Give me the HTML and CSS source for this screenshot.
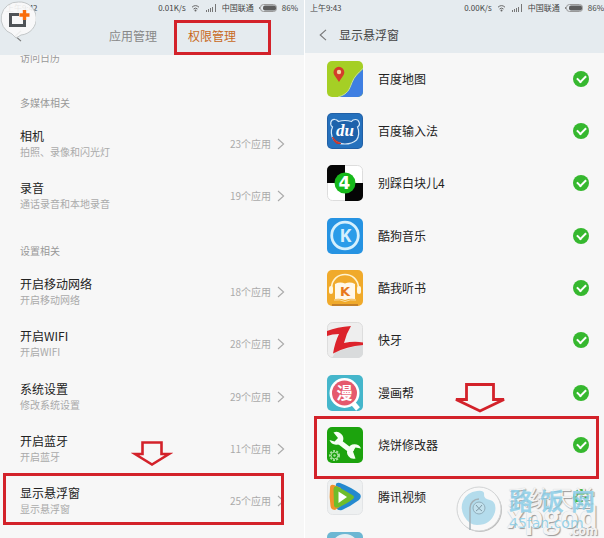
FILE: index.html
```html
<!DOCTYPE html>
<html lang="zh-CN">
<head>
    <meta charset="UTF-8">
    <meta name="viewport" content="width=device-width, initial-scale=1.0">
    <title>权限管理</title>
    <link rel="stylesheet" href="styles.css">
</head>
<body>

    <!-- iconos compartidos -->
    <svg class="defs" width="0" height="0" aria-hidden="true">
        <symbol id="wifi" viewBox="0 0 9 8">
            <path d="M1 3.2Q4.5 0 8 3.2M2.5 5Q4.5 3.2 6.5 5" fill="none" stroke="#666" stroke-width="1"/>
            <circle cx="4.5" cy="6.4" r="1" fill="#666"/>
        </symbol>
        <symbol id="signal" viewBox="0 0 12 8">
            <path d="M1.5 8V6M3.5 8V5M5.5 8V4M7.5 8V3M10.5 8V0" stroke="#777" stroke-width="1"/>
        </symbol>
        <symbol id="battery" viewBox="0 0 18 8">
            <rect x="1.5" y=".5" width="16" height="7" rx="3" fill="none" stroke="#999"/>
            <rect x="4" y="1.5" width="13" height="5" rx="2" fill="#5d5d5d"/>
            <path d="M.5 3v2" stroke="#888"/>
        </symbol>
        <symbol id="back" viewBox="0 0 8 12">
            <path d="M7 .8L1.2 6L7 11.2" fill="none" stroke="#777" stroke-width="1.1"/>
        </symbol>
        <symbol id="next" viewBox="0 0 8 12">
            <path d="M1 1L6.6 6L1 11" fill="none" stroke="#aaa" stroke-width="1.1"/>
        </symbol>
    </svg>

    <main class="screens">
        <section class="phone">
            <header class="top">
                <div class="status">
                    <span class="time">上午9:42</span>
                    <span>0.01K/s</span>
                    <svg class="wifi"><use href="#wifi"/></svg>
                    <svg class="signal"><use href="#signal"/></svg>
                    <span>中国联通</span>
                    <svg class="battery"><use href="#battery"/></svg>
                    <span>86%</span>
                </div>
                <nav class="bar tabs">
                    <button class="back" aria-label="返回"><svg><use href="#back"/></svg></button>
                    <button class="tab">应用管理</button>
                    <button class="tab active">权限管理<span class="mark"></span></button>
                </nav>
                <svg class="bubble" viewBox="0 0 36 42" aria-hidden="true">
                    <path d="M18.5 2A16.5 16.5 0 0 1 21 35L16 38L12 34A16.5 16.5 0 0 1 18.5 2Z" fill="#fafafa" fill-opacity=".9" stroke="#c3c7c9"/>
                    <path d="M19 14.5H10.5V25.5H24.5V20" fill="none" stroke="#4f5357" stroke-width="3"/>
                    <path d="M24.5 10v10M19.5 15h10" stroke="#f96d0b" stroke-width="3.4"/>
                </svg>
            </header>

            <div class="list">
                <p class="cut">访问日历</p>

                <h2>多媒体相关</h2>
                <a class="row" href="#">
                    <span class="name">相机<small>拍照、录像和闪光灯</small></span>
                    <span class="count">23个应用</span>
                    <svg class="next"><use href="#next"/></svg>
                </a>
                <a class="row" href="#">
                    <span class="name">录音<small>通话录音和本地录音</small></span>
                    <span class="count">19个应用</span>
                    <svg class="next"><use href="#next"/></svg>
                </a>

                <h2>设置相关</h2>
                <a class="row" href="#">
                    <span class="name">开启移动网络<small>开启移动网络</small></span>
                    <span class="count">18个应用</span>
                    <svg class="next"><use href="#next"/></svg>
                </a>
                <a class="row" href="#">
                    <span class="name">开启WIFI<small>开启WIFI</small></span>
                    <span class="count">28个应用</span>
                    <svg class="next"><use href="#next"/></svg>
                </a>
                <a class="row" href="#">
                    <span class="name">系统设置<small>修改系统设置</small></span>
                    <span class="count">29个应用</span>
                    <svg class="next"><use href="#next"/></svg>
                </a>
                <a class="row" href="#">
                    <span class="name">开启蓝牙<small>开启蓝牙</small></span>
                    <span class="count">11个应用</span>
                    <svg class="next"><use href="#next"/></svg>
                </a>
                <a class="row" href="#">
                    <span class="name">显示悬浮窗<small>显示悬浮窗</small></span>
                    <span class="count">25个应用</span>
                    <svg class="next"><use href="#next"/></svg>
                    <span class="mark"></span>
                    <svg class="arrow" viewBox="0 0 42 26">
                        <path d="M11.5 1.5H30.500V13H38L21 23.500L4 13H11.500Z" fill="#f7f7f7" stroke="#d3222a" stroke-width="2.6"/>
                    </svg>
                </a>
            </div>
        </section>

        <section class="phone second">
            <header class="top">
                <div class="status">
                    <span class="time">上午9:43</span>
                    <span>0.00K/s</span>
                    <svg class="wifi"><use href="#wifi"/></svg>
                    <svg class="signal"><use href="#signal"/></svg>
                    <span>中国联通</span>
                    <svg class="battery"><use href="#battery"/></svg>
                    <span>86%</span>
                </div>
                <div class="bar">
                    <button class="back" aria-label="返回"><svg><use href="#back"/></svg></button>
                    <h1>显示悬浮窗</h1>
                </div>
            </header>

            <div class="apps">
                <label class="app">
                    <svg class="icon" viewBox="0 0 36 36">
                        <rect width="36" height="36" rx="5" fill="#a5cf25"/>
                        <path d="M36 8V31a5 5 0 0 1-5 5H12C21 33 22 29 25 22C27 16 31 13 36 8Z" fill="#3f7fe2"/>
                        <path d="M36 7.5C31 12 27 16 25 21.5C22 29 21 33 11 36" fill="none" stroke="#c4dfa0"/>
                        <path d="M12 21C9 16 6.5 14 6.5 11.2a5.4 5.4 0 0 1 10.8 0C17.3 14 15 16 12 21Z" fill="#d33d2b"/>
                        <circle cx="12" cy="11" r="2.2" fill="#f2d6a0"/>
                    </svg>
                    <span>百度地图</span>
                    <input type="checkbox" checked>
                </label>
                <label class="app">
                    <svg class="icon" viewBox="0 0 36 36">
                        <rect width="36" height="36" rx="5" fill="#2160a6"/>
                        <rect x="1" y="1" width="34" height="34" rx="4" fill="#2571bd"/>
                        <path d="M7 27C3.5 23 4 17 5.5 14C2 11 4 6 8 6.5C10 6.5 11 8 11.5 8.5Q18 6.5 24.5 8.5C26 6 31 5.5 32 9C33 11 32 13 30.5 14C32.5 18 32 24 29.5 27Q25 31 18 31Q11 31 7 27Z" fill="#1d62ab" stroke="#d5e8f8" stroke-width="1.2"/>
                        <path d="M5.5 24Q9 29 14 30.5L10 30.5Q6 28 5.5 24Z" fill="#c5372d" stroke="#c5372d"/>
                        <text x="18" y="23" class="glyph du">du</text>
                    </svg>
                    <span>百度输入法</span>
                    <input type="checkbox" checked>
                </label>
                <label class="app">
                    <svg class="icon" viewBox="0 0 36 36">
                        <rect x=".5" y=".5" width="35" height="35" rx="5" fill="#fff" stroke="#ddd"/>
                        <path d="M18 0V18H0V5a5 5 0 0 1 5-5ZM18 18H36V31a5 5 0 0 1-5 5H18Z" fill="#050505"/>
                        <circle cx="18" cy="18" r="10.5" fill="#16b91b"/>
                        <text x="17.5" y="24" class="glyph four">4</text>
                    </svg>
                    <span>别踩白块儿4</span>
                    <input type="checkbox" checked>
                </label>
                <label class="app">
                    <svg class="icon" viewBox="0 0 36 36">
                        <rect width="36" height="36" rx="5" fill="#2693e2"/>
                        <circle cx="18" cy="17.5" r="13.3" fill="#2a9ce9" stroke="#d5f0fd" stroke-width="2.8"/>
                        <text x="18.5" y="24" class="glyph kg">K</text>
                    </svg>
                    <span>酷狗音乐</span>
                    <input type="checkbox" checked>
                </label>
                <label class="app">
                    <svg class="icon" viewBox="0 0 36 36">
                        <rect width="36" height="36" rx="5" fill="#f0aa2b"/>
                        <path d="M5 35H31" stroke="#b9752a" stroke-width="1.6"/>
                        <path d="M4.5 18C5 0 31 0 31.5 18" fill="none" stroke="#fff3cf" stroke-width="1.6"/>
                        <rect x="2" y="16" width="4" height="8" rx="2" fill="#fff6df"/>
                        <rect x="30" y="16" width="4" height="8" rx="2" fill="#fff6df"/>
                        <path d="M8 14Q13 11.5 18 13.5Q23 11.5 28 14V29Q23 28 18 30Q13 28 8 29Z" fill="#fff8ea"/>
                        <path d="M7 30Q13 29 18 31.5Q23 29 29 30" fill="none" stroke="#fbdda0"/>
                        <text x="18" y="26" class="glyph kw">K</text>
                    </svg>
                    <span>酷我听书</span>
                    <input type="checkbox" checked>
                </label>
                <label class="app">
                    <svg class="icon" viewBox="0 0 36 36">
                        <rect x=".5" y=".5" width="35" height="35" rx="5" fill="#eee" stroke="#ddd"/>
                        <path d="M8 30L36 22V31a5 5 0 0 1-5 5H5Q7 33 8 30Z" fill="#d9dbdc"/>
                        <path d="M0 9Q10 5 24 4Q19 12 17 21Q27 19 36 20.5V23Q20 24 6 31.5Q8 20 12 12Q5 12 0 14Z" fill="#dc232b"/>
                    </svg>
                    <span>快牙</span>
                    <input type="checkbox" checked>
                </label>
                <label class="app">
                    <svg class="icon" viewBox="0 0 36 36">
                        <rect width="36" height="36" rx="5" fill="#45b6cb"/>
                        <path d="M25 27L31 34" stroke="#fff" stroke-width="5"/>
                        <circle cx="17.5" cy="18" r="15" fill="#fff"/>
                        <circle cx="17.5" cy="18" r="12.5" fill="#e5596d"/>
                        <text x="17.5" y="24" class="glyph man">漫</text>
                    </svg>
                    <span>漫画帮</span>
                    <input type="checkbox" checked>
                </label>
                <label class="app">
                    <svg class="icon" viewBox="0 0 36 36">
                        <rect width="36" height="36" rx="5" fill="#1ca30d"/>
                        <path d="M10.5 13.5L25.5 25" stroke="#f6fff4" stroke-width="5"/>
                        <path d="M6.5 5.5A7 7 0 0 1 16 14A7.5 7.5 0 0 1 2.5 13L7.5 14.5L11 11Z" fill="#f6fff4"/>
                        <path d="M28.5 31.5A6.5 6.5 0 0 1 21 22A7 7 0 0 1 34 21.5L28.5 20.5L26 24.5Z" fill="#f6fff4"/>
                        <circle cx="7.5" cy="28.5" r="4.5" fill="none" stroke="#a9e09f" stroke-width="2" stroke-dasharray="2 1.2"/>
                        <circle cx="7.5" cy="28.5" r="3.4" fill="none" stroke="#a9e09f"/>
                        <circle cx="7.5" cy="28.5" r="1.2" fill="#a9e09f"/>
                    </svg>
                    <span>烧饼修改器</span>
                    <input type="checkbox" checked>
                    <span class="mark"></span>
                    <svg class="arrow" viewBox="0 0 56 30">
                        <path d="M14.5 1.5H41.5V16.5H52L28 28L4 16.5H14.5Z" fill="#f7f7f7" stroke="#d3222a" stroke-width="2.8"/>
                    </svg>
                </label>
                <label class="app">
                    <svg class="icon" viewBox="0 0 36 36">
                        <rect x=".5" y=".5" width="35" height="35" rx="5" fill="#eef0f1" stroke="#e2e4e6"/>
                        <path d="M9 7Q8 3 13 4Q24 8 33 15Q35 18 32 21Q24 27 15 31Q10 32 9 28Z" fill="#2489cf"/>
                        <path d="M3 9Q3 5 7 6L14 9V27L8 31Q4 31 3.5 27Q2 18 3 9Z" fill="#f2922b"/>
                        <path d="M6.5 10Q7 6 11 8Q19 12 26 16.5Q28 18 26 20Q18 26 11 28.5Q7 29 7 26Z" fill="#6fbd2a"/>
                        <path d="M11.5 12.5L20 18L11.5 24Z" fill="#fff"/>
                    </svg>
                    <span>腾讯视频</span>
                    <input type="checkbox" checked>
                </label>
                <div class="app">
                    <svg class="icon" viewBox="0 0 36 36">
                        <rect width="36" height="36" rx="5" fill="#6db7d3"/>
                        <circle cx="18" cy="16" r="14" fill="#e4eff4"/>
                    </svg>
                </div>
            </div>

            <!-- marcas de agua -->
            <div class="watermark">
                <svg viewBox="0 0 48 48" aria-hidden="true">
                    <circle cx="25" cy="25" r="22" fill="#bbb"/>
                    <circle cx="24" cy="24" r="22" fill="#f8f8f8" stroke="#d2d4d5"/>
                    <path d="M8 16Q12 7 22 6Q30 5 29 10Q29 14 35 15Q42 17 40 27Q36 40 22 40Q14 40 9 31Q5 23 8 16Z" fill="#b4dcec"/>
                    <path d="M15 45V23A9 9 0 0 1 24 14" fill="none" stroke="#a3b0b6" stroke-width="1.5"/>
                    <circle cx="24" cy="23" r="6" fill="#c2e1ed" stroke="#91aebb"/>
                    <path d="M21 20Q24 24 27 26M27 20Q24 24 21 26" fill="none" stroke="#7f99a5"/>
                </svg>
                <div class="wm-gray">
                    <span>系统天堂</span>
                    <b>xpgod</b>
                    <i>.com</i>
                </div>
                <div class="wm-blue">
                    <strong><span>路</span><span>饭</span><span>网</span></strong>
                    <em>45fan.com</em>
                </div>
            </div>
        </section>
    </main>

</body>
</html>
```

FILE: styles.css
```css
* {
    box-sizing: border-box;
}

body {
    margin: 0;
    background-color: #fff;
    color: #222;
    font-family: "Noto Sans CJK SC", "Noto Sans", sans-serif;
    font-size: 12px;
    line-height: 16px;
}

.defs {
    position: absolute;
}

h1, h2, p {
    margin: 0;
    font-weight: normal;
}

button {
    padding: 0;
    border: none;
    background: none;
    color: inherit;
    font: inherit;
    cursor: pointer;
}

.screens {
    display: grid;
    grid-template-columns: 304fr 299fr;
    gap: 1px;
    height: 100vh;
    overflow: hidden;
}

.phone {
    position: relative;
    overflow: hidden;
    background-color: #f7f7f7;
}

/* Cabecera */
.top {
    position: relative;
    z-index: 1;
    height: 55px;
    background-color: #e5ebef;
}

.second .top {
    height: 53px;
}

.status {
    display: flex;
    align-items: center;
    gap: 5px;
    height: 16px;
    padding: 0 6px;
    color: #444;
    font-size: 8px;
    white-space: nowrap;
}

.second .status {
    padding: 0 0 0 5px;
}

.time {
    margin-right: auto;
}

.wifi {
    width: 9px;
    height: 8px;
}

.signal {
    width: 12px;
    height: 8px;
}

.battery {
    width: 18px;
    height: 8px;
}

.bar {
    display: flex;
    align-items: center;
    height: 37px;
    padding-left: 14px;
}

.bar h1 {
    margin-left: 12px;
    color: #444;
    font-size: 12px;
}

.back svg {
    display: block;
    width: 8px;
    height: 12px;
}

.tabs {
    height: 40px;
}

.tab {
    position: relative;
    margin-left: 31px;
    color: #888;
}

.back + .tab {
    margin-left: 87px;
}

.tab.active {
    color: #c8691c;
}

.bubble {
    position: absolute;
    top: 0;
    left: 0;
    width: 36px;
    height: 42px;
}

/* Recuadros y flechas rojas */
.mark {
    position: absolute;
    border: 3px solid #d3222a;
    pointer-events: none;
}

.tab .mark {
    inset: -8px -35px -11px -14px;
}

.row .mark {
    inset: -2px 20px 2px 3px;
}

.app .mark {
    inset: -3px 5px -8px 9px;
}

.arrow {
    position: absolute;
    bottom: 100%;
}

.row .arrow {
    left: 43%;
    width: 42px;
    margin-bottom: 8px;
}

.app .arrow {
    left: 49%;
    width: 56px;
    margin-bottom: 6px;
}

/* Lista de permisos */
.cut {
    height: 19px;
    margin-top: -5px;
    margin-bottom: 5px;
    padding-left: 20px;
    color: #999;
    font-size: 10px;
}

.list h2 {
    height: 44px;
    padding: 21px 20px 0;
    color: #999;
    font-size: 10px;
}

.row {
    position: relative;
    display: flex;
    align-items: center;
    height: 52px;
    padding: 0 19px 0 20px;
    color: #222;
    text-decoration: none;
}

.row:nth-of-type(4n) {
    margin-bottom: 1px;
}

.name {
    flex: 1;
}

.name small {
    display: block;
    color: #aaa;
    font-size: 10px;
}

.count {
    color: #aaa;
    font-size: 10px;
}

.next {
    width: 8px;
    height: 12px;
    margin-left: 6px;
}

/* Lista de aplicaciones */
.app {
    position: relative;
    display: flex;
    align-items: center;
    gap: 15px;
    height: 52px;
    padding: 0 15px 0 22px;
}

.app:nth-child(3n) {
    margin-bottom: 1px;
}

.icon {
    width: 36px;
    height: 36px;
}

.app input {
    appearance: none;
    display: grid;
    place-items: center;
    width: 16px;
    height: 16px;
    margin: 0 0 0 auto;
    border-radius: 50%;
    background-color: #36b82f;
}

.app input:checked::after {
    content: "";
    width: 7px;
    height: 4px;
    margin-bottom: 2px;
    border: solid #fff;
    border-width: 0 0 2px 2px;
    transform: rotate(-45deg);
}

.glyph {
    fill: #fff;
    font-family: "Open Sans", sans-serif;
    font-weight: bold;
    text-anchor: middle;
}

.du {
    font-family: "Liberation Serif", serif;
    font-size: 17px;
    font-style: italic;
}

.four {
    font-family: "DejaVu Sans", sans-serif;
    font-size: 17px;
}

.kg {
    fill: #d5f0fd;
    font-size: 18px;
}

.kw {
    fill: #e8791c;
    font-family: "DejaVu Sans", sans-serif;
    font-size: 13px;
}

.man {
    font-family: "Noto Sans CJK SC", sans-serif;
    font-size: 16px;
}

/* Marcas de agua */
.watermark {
    position: absolute;
    right: 0;
    bottom: 0;
    width: 149px;
    height: 56px;
    pointer-events: none;
}

.watermark svg {
    position: absolute;
    top: 3px;
    left: 0;
    width: 48px;
    height: 48px;
}

.wm-gray,
.wm-blue {
    position: absolute;
    top: 3px;
    left: 52px;
    display: flex;
    flex-direction: column;
}

.wm-gray {
    color: #f4f4f4;
    text-shadow: 1px 1px 1px #999, 0 0 1px #ccc;
}

.wm-gray span {
    font-size: 22px;
    line-height: 22px;
    white-space: nowrap;
}

.wm-gray b {
    font-family: "Open Sans", sans-serif;
    font-size: 30px;
    line-height: 20px;
}

.wm-gray i {
    align-self: flex-end;
    font: bold 12px/8px "Open Sans", sans-serif;
}

.wm-blue {
    top: 5px;
    left: 54px;
    color: rgba(140, 206, 232, 0.85);
}

.wm-blue strong {
    display: flex;
    gap: 7px;
    font-size: 24px;
    line-height: 26px;
}

.wm-blue em {
    font: 14px/20px "DejaVu Sans", sans-serif;
}
```
